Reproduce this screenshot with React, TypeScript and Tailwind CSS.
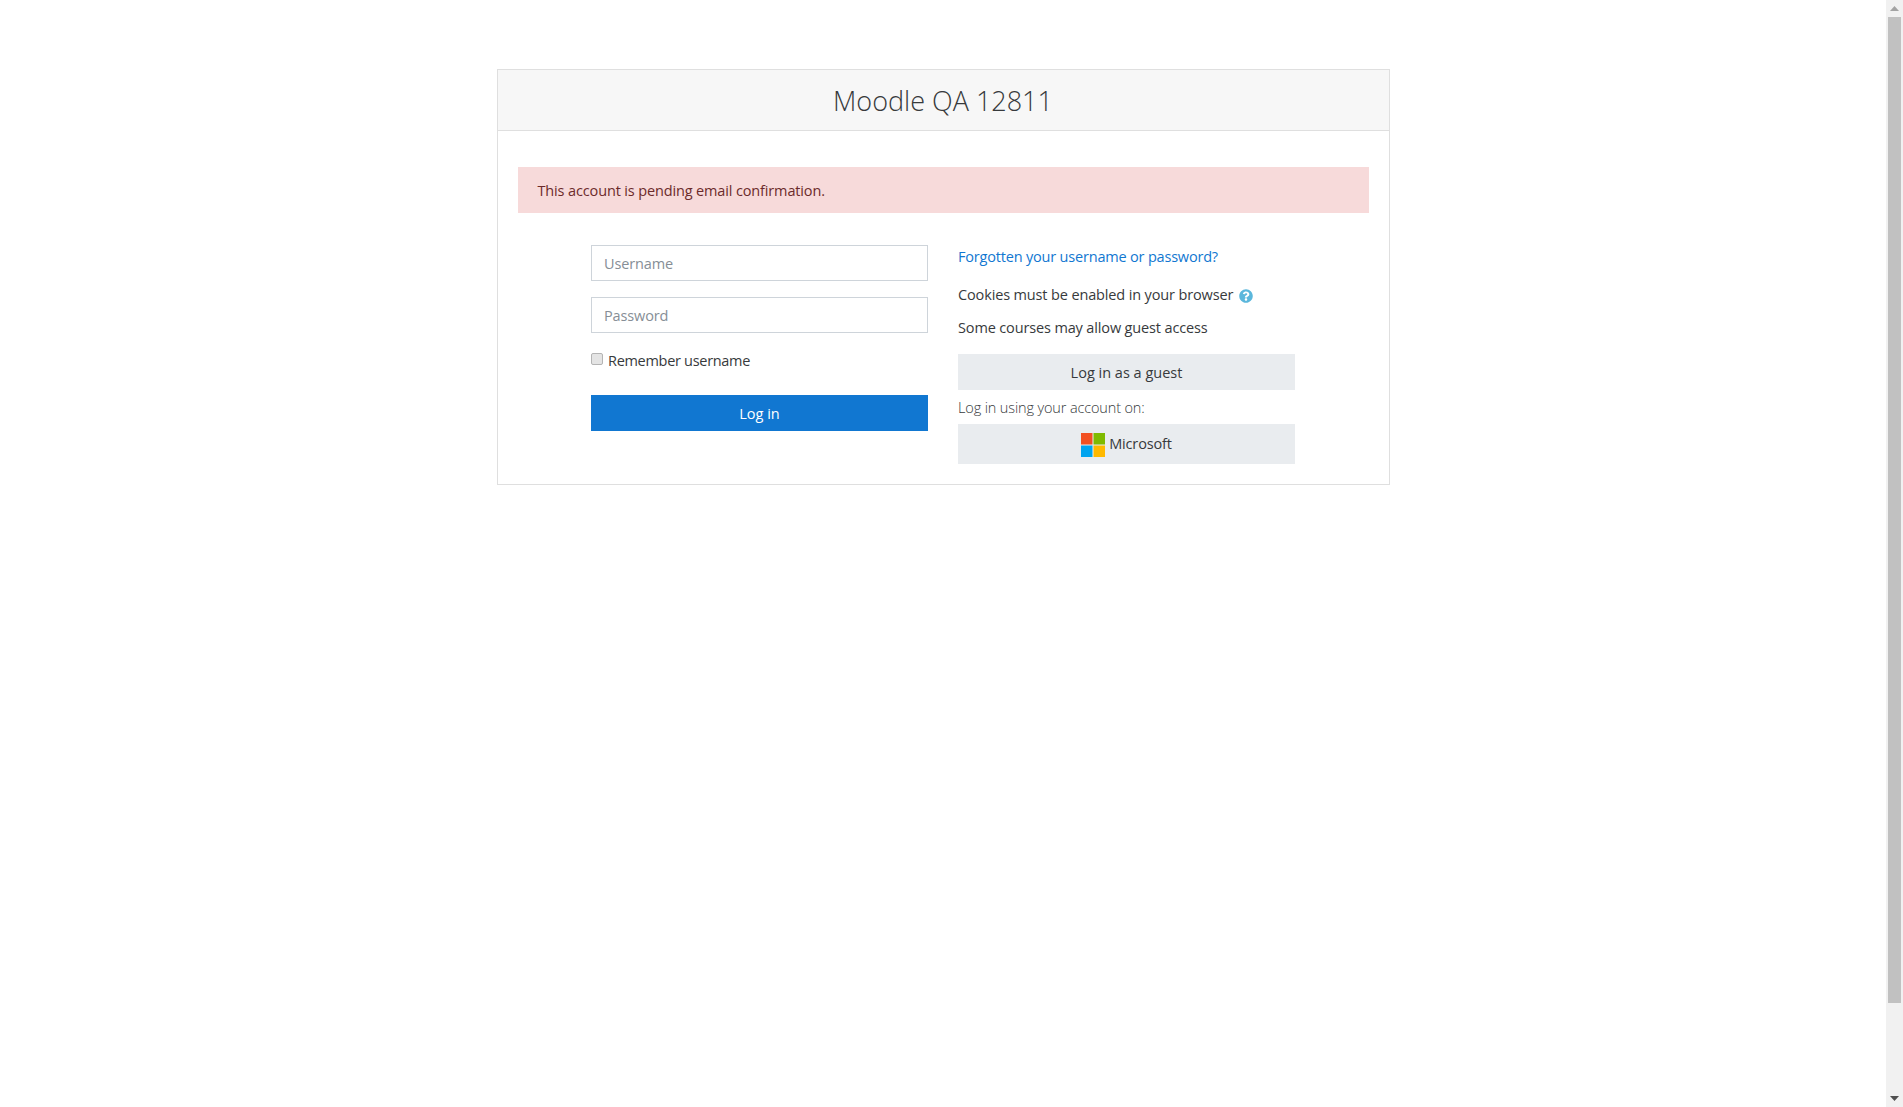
import React from 'react';
import { FaQuestionCircle } from 'react-icons/fa';

function MicrosoftLogo() {
    return (
        <svg width="24" height="24" viewBox="0 0 24 24" className="shrink-0 mt-[2px]">
            <rect x="0" y="0" width="11.5" height="11.5" fill="#f25022" />
            <rect x="12.5" y="0" width="11.5" height="11.5" fill="#7fba00" />
            <rect x="0" y="12.5" width="11.5" height="11.5" fill="#00a4ef" />
            <rect x="12.5" y="12.5" width="11.5" height="11.5" fill="#ffb900" />
        </svg>
    );
}

function PageScrollbar() {
    return (
        <div className="w-[17px] shrink-0 bg-[#f1f1f1] flex flex-col items-center">
            <div className="h-[17px] flex items-center justify-center">
                <svg width="9" height="5" viewBox="0 0 9 5"><path d="M4.5 0L9 5H0z" fill="#a3a3a3" /></svg>
            </div>
            <div className="w-[13px] h-[986px] bg-[#c1c1c1]" />
            <div className="mt-auto h-[17px] flex items-center justify-center">
                <svg width="9" height="5" viewBox="0 0 9 5"><path d="M4.5 5L0 0h9z" fill="#505050" /></svg>
            </div>
        </div>
    );
}

export default function App() {
    return (
        <div className="h-screen flex overflow-hidden bg-white text-[14.5px] tracking-[-0.14px] text-[#373a3c] font-['Open_Sans',sans-serif]">
            <div className="flex-1 pt-[69px]">
                <div className="w-[893px] h-[416px] mx-auto border border-[#dfdfdf]">
                    <div className="h-[61px] bg-[#f7f7f7] border-b border-[#dfdfdf] flex items-center justify-center">
                        <h1 className="text-[27px] font-light tracking-normal mt-[2px] text-[#373a3c]">Moodle QA 12811</h1>
                    </div>
                    <div className="px-5 pt-9">
                        <div className="h-[46px] px-5 pt-px flex items-center bg-[#f7dada] text-[#6c2b2b]">
                            This account is pending email confirmation.
                        </div>
                        <div className="mt-8 flex justify-center gap-[30px]">
                            <form className="w-[337px]">
                                <input
                                    className="block w-full h-9 px-3 border border-[#ced4da] outline-none placeholder:text-[#868e96]"
                                    type="text"
                                    placeholder="Username"
                                />
                                <input
                                    className="block w-full h-9 mt-4 px-3 border border-[#ced4da] outline-none placeholder:text-[#868e96]"
                                    type="password"
                                    placeholder="Password"
                                />
                                <label className="mt-[12px] h-[30px] flex items-center gap-[5px]">
                                    <input type="checkbox" className="appearance-none w-3 h-3 m-0 -mt-[2px] bg-[#e4e4e4] border border-[#b4b4b4] rounded-[2px]" />
                                    <span className="pt-px tracking-[-0.3px]">Remember username</span>
                                </label>
                                <button type="button" className="block w-full h-9 mt-[20px] pt-px tracking-normal bg-[#1177d1] text-white">Log in</button>
                            </form>
                            <div className="w-[337px]">
                                <a className="block h-6 leading-6 tracking-[-0.19px] text-[#1177d1]" href="#">Forgotten your username or password?</a>
                                <div className="mt-[14px] h-6 flex items-center gap-[6px]">
                                    <span>Cookies must be enabled in your browser</span>
                                    <FaQuestionCircle size={14} className="text-[#5bb7dc] mt-[2px]" />
                                </div>
                                <div className="mt-[9px] h-6 leading-6">Some courses may allow guest access</div>
                                <button type="button" className="block w-full h-9 mt-[14px] pt-px tracking-normal bg-[#e9ecef]">Log in as a guest</button>
                                <div className="h-[34px] leading-[36px] font-light">Log in using your account on:</div>
                                <button type="button" className="w-full h-10 bg-[#e9ecef] flex items-center justify-center gap-[4px]">
                                    <MicrosoftLogo />
                                    <span>Microsoft</span>
                                </button>
                            </div>
                        </div>
                    </div>
                </div>
            </div>
            <PageScrollbar />
        </div>
    );
}
